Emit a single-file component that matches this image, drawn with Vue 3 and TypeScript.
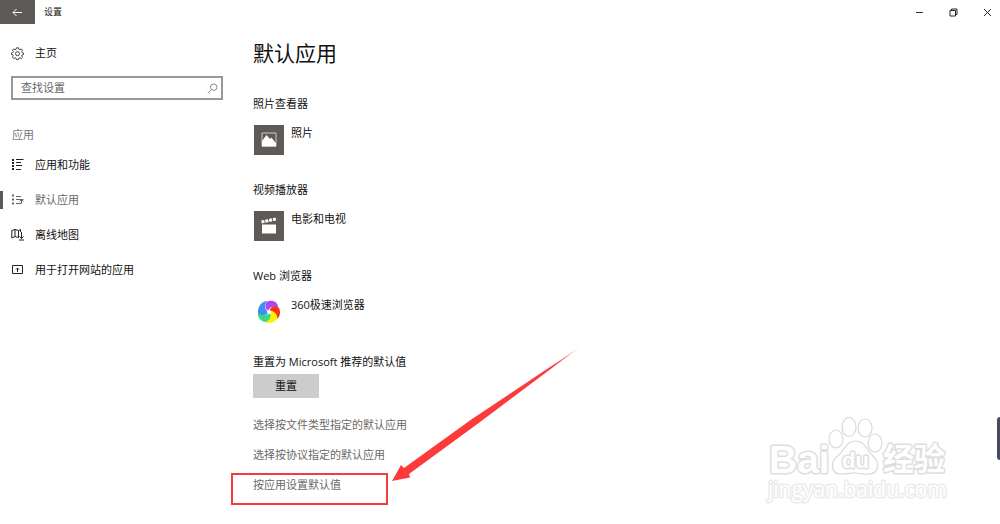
<script setup lang="ts">
import { ref } from 'vue'

interface NavItem {
  id: string
  label: string
}

interface DefaultApp {
  id: string
  category: string
  name: string
}

const query = ref('')
const active = ref('defaults')

const navItems: NavItem[] = [
  { id: 'features', label: '应用和功能' },
  { id: 'defaults', label: '默认应用' },
  { id: 'maps', label: '离线地图' },
  { id: 'websites', label: '用于打开网站的应用' },
]

const defaultApps: DefaultApp[] = [
  { id: 'photos', category: '照片查看器', name: '照片' },
  { id: 'video', category: '视频播放器', name: '电影和电视' },
  { id: 'browser', category: 'Web 浏览器', name: '360极速浏览器' },
]

const links: string[] = ['选择按文件类型指定的默认应用', '选择按协议指定的默认应用', '按应用设置默认值']
</script>

<template>
  <div class="window">
    <header class="titlebar">
      <button class="back" type="button" aria-label="返回">
        <svg width="11" height="9" viewBox="0 0 11 9">
          <path d="M10 4.500H1M4.500 1 1 4.500 4.500 8" fill="none" stroke="#fff" />
        </svg>
      </button>
      <span class="title">设置</span>
      <div class="controls">
        <button type="button" aria-label="最小化">
          <svg width="9" height="9" viewBox="0 0 9 9"><path d="M1 4.500h7" stroke="#333" /></svg>
        </button>
        <button type="button" aria-label="还原">
          <svg width="9" height="9" viewBox="0 0 9 9">
            <path d="M1 2.500h5.500V8H1zM2.500 2.500V1H8v5.500H6.500" fill="none" stroke="#222" />
          </svg>
        </button>
        <button type="button" aria-label="关闭">
          <svg width="9" height="9" viewBox="0 0 9 9">
            <path d="M1 1l7 7M8 1 1 8" fill="none" stroke="#222" />
          </svg>
        </button>
      </div>
    </header>

    <div class="body">
      <aside class="sidebar">
        <a class="home" href="#home">
          <svg width="13" height="13" viewBox="0 0 13 13" fill="none" stroke="#333" stroke-width=".9">
            <path d="M5.500 .8h2l.4 1.500 1 .4 1.400-.8 1.200 1.300-.8 1.400.4 1 1.400.4v1.500l-1.400.4-.4 1 .8 1.400-1.200 1.300-1.400-.8-1 .4-.4 1.400h-2l-.4-1.400-1-.4-1.400.8-1.200-1.300.8-1.400-.4-1L.5 7.500V6l1.400-.4.4-1-.8-1.400 1.200-1.300 1.400.8 1-.4z" />
            <circle cx="6.500" cy="6.700" r="2" />
          </svg>
          <span>主页</span>
        </a>
        <label class="search">
          <input v-model="query" type="text" placeholder="查找设置" aria-label="查找设置" />
          <svg width="11" height="11" viewBox="0 0 11 11" fill="none" stroke="#888">
            <circle cx="6.700" cy="4.200" r="3.200" />
            <path d="M4.400 6.500.8 10.200" />
          </svg>
        </label>
        <h2 class="group">应用</h2>
        <nav>
          <a
            v-for="item in navItems"
            :key="item.id"
            :href="'#' + item.id"
            :class="['nav-item', { active: item.id === active }]"
            @click="active = item.id"
          >
            <svg v-if="item.id === 'features'" width="13" height="13" viewBox="0 0 13 13" fill="none" stroke="#222">
              <path d="M2 1v11" stroke-width="2" stroke-dasharray="2 1" />
              <path d="M5 1.500h7.500M5 4.500h5M5 7.500h6M5 11.500h5" />
            </svg>
            <svg v-else-if="item.id === 'defaults'" width="13" height="13" viewBox="0 0 13 13" fill="none" stroke="#666">
              <path d="M1 2.500h2M1 6.500h2M1 10.500h2" stroke-width="2" />
              <path d="M5 3.500h5M5 6.500h7.500M5 10.500h5.500v-4M8.500 8.500l2-2 2 2" />
            </svg>
            <svg v-else-if="item.id === 'maps'" width="13" height="13" viewBox="0 0 13 13" fill="none" stroke="#222">
              <path d="M7.500 9.500 4 8.500.8 10V2.500L4 1.500l3.500 1 2-1V4M4 1.500v7M7.500 2.500v7M10.500 4v6.500M8.500 8.500l2 2 2-2M8 12h5" />
            </svg>
            <svg v-else width="13" height="13" viewBox="0 0 13 13" fill="none" stroke="#222">
              <path d="M1.500 2.500h10v8h-10zM6.500 9V5M5 6.500l1.500-1.500L8 6.500" />
            </svg>
            <span>{{ item.label }}</span>
          </a>
        </nav>
      </aside>

      <main class="content">
        <h1>默认应用</h1>

        <section v-for="app in defaultApps" :key="app.id" class="app">
          <h3>{{ app.category }}</h3>
          <button class="app-pick" type="button">
            <svg v-if="app.id === 'photos'" width="30" height="30" viewBox="0 0 30 30">
              <path fill="#5d5a58" d="M0 0h30v30H0z" />
              <path d="M8 8h14v13H8z" fill="none" stroke="#ccc" />
              <path d="M8 21.500V16l4.500-6 3.500 4 1.500-1.500 4.500 6v3z" fill="#fff" />
            </svg>
            <svg v-else-if="app.id === 'video'" width="30" height="30" viewBox="0 0 30 30">
              <path fill="#5d5a58" d="M0 0h30v30H0z" />
              <path d="M8 13.500h14v9H8z" fill="#fff" />
              <path d="M7.500 11 22 8" stroke="#fff" stroke-width="3" stroke-dasharray="3 .9" />
            </svg>
            <svg v-else width="30" height="30" viewBox="0 0 30 30">
              <g transform="translate(15 15)">
                <path d="M-1-1C-5-5-4-10 0-11 5-12 9-9 9-5L6-5C3-6 0-4-1-1" fill="#b044f4" />
                <path d="M0-1C2-6 7-7 10-4 12 0 11 5 8 7L6 3C5 0 3-2 0-1" fill="#fa3418" />
                <path d="M1-1C6-1 9 3 8 7 5 11-1 12-4 10L-1 7C2 5 2 2 1-1" fill="#fdf000" />
                <path d="M1 1C3 5 0 9-4 10-9 9-12 4-11 0L-7 1C-4 3-2 3 1 1" fill="#35da82" />
                <path d="M0 1C-5 4-10 4-11 0-11-6-7-11-2-11L-4-7C-4-4-3-1 0 1" fill="#438df7" />
                <circle r="2" fill="#fff" />
              </g>
            </svg>
            <span>{{ app.name }}</span>
          </button>
        </section>

        <section class="reset">
          <h3>重置为 Microsoft 推荐的默认值</h3>
          <button type="button">重置</button>
        </section>

        <ul class="links">
          <li v-for="(link, index) in links" :key="link">
            <a :href="'#link-' + index">{{ link }}</a>
            <template v-if="index === links.length - 1">
              <span class="highlight"></span>
              <svg class="arrow" width="190" height="136" viewBox="0 0 190 136">
                <defs>
                  <linearGradient id="tail" x1="0" y1="1" x2="1" y2="0">
                    <stop offset=".85" stop-color="#fb3a39" />
                    <stop offset="1" stop-color="#fb3a39" stop-opacity=".3" />
                  </linearGradient>
                </defs>
                <path d="M0 134 9 118 12 121 80 72 188 0 84 78 17 127 18 130.500z" fill="url(#tail)" />
              </svg>
            </template>
          </li>
        </ul>
      </main>
    </div>

    <svg class="watermark" width="190" height="92" viewBox="0 0 190 92">
      <g fill="#fff" stroke="#dadada" stroke-width="1.200" stroke-linejoin="round">
        <ellipse cx="71" cy="22" rx="7" ry="9" />
        <ellipse cx="84" cy="10" rx="7" ry="9.500" />
        <ellipse cx="100" cy="11" rx="7" ry="9" />
        <ellipse cx="110" cy="26" rx="7" ry="9" />
        <path d="M90 24C82 24 79 33 74 38 65 44 65 56 75 57 82 58 86 55 91 56 98 57 106 59 111 54 116 46 109 40 105 36 101 30 98 24 90 24z" />
      </g>
      <g class="lettering">
        <text class="brand" x="4" y="56">Bai</text>
        <text class="cjk" x="118" y="53">经验</text>
        <text class="du" x="77" y="51">du</text>
        <text class="site" x="3" y="80">jingyan.baidu.com</text>
      </g>
    </svg>
    <div class="side-handle"></div>
  </div>
</template>

<style>
body {
  margin: 0;
  background: #fff;
}
</style>

<style scoped>
.window {
  position: relative;
  min-height: 100vh;
  overflow: hidden;
  color: #111;
  background: #fff;
  font: 11px/16px 'Open Sans', 'Noto Sans CJK SC', sans-serif;
}
button,
input {
  font: inherit;
  color: inherit;
  border: 0;
  padding: 0;
  background: none;
}
a {
  color: inherit;
  text-decoration: none;
}
h1,
h2,
h3,
ul {
  margin: 0;
  padding: 0;
  font-weight: 400;
  list-style: none;
}
h2,
h3 {
  font-size: 11px;
}
svg {
  display: block;
  flex: none;
}
.titlebar {
  display: flex;
  align-items: center;
  height: 24px;
}
.back {
  display: grid;
  place-items: center;
  width: 35px;
  height: 24px;
  background: #5d5a58;
}
.title {
  margin-left: 9px;
  font-size: 9px;
}
.controls {
  display: flex;
  margin-left: auto;
}
.controls button {
  display: grid;
  place-items: center;
  width: 34px;
  height: 24px;
}
.controls button:last-child {
  margin-right: -4px;
}
.body {
  display: grid;
  grid-template-columns: 223px 1fr;
  column-gap: 30px;
}
.sidebar {
  padding-top: 21px;
}
.home,
.nav-item {
  display: flex;
  align-items: center;
  gap: 11px;
  padding-left: 11px;
}
.search {
  display: flex;
  align-items: center;
  box-sizing: border-box;
  height: 24px;
  margin: 15px 0 0 11px;
  padding: 0 3px 0 8px;
  border: 2px solid #999;
}
.search input {
  flex: 1;
  min-width: 0;
  outline: 0;
}
.search input::placeholder {
  color: #666;
  opacity: 1;
}
.group {
  margin: 27px 0 4px 12px;
  color: #777;
}
.nav-item {
  height: 35px;
}
.nav-item.active {
  color: #6b6866;
  background: linear-gradient(#5d5a58, #5d5a58) left center / 3px 18px no-repeat;
}
.content {
  padding-top: 14px;
}
h1 {
  font-size: 21px;
  line-height: 30px;
}
.app {
  height: 58px;
  margin-top: 28px;
}
.app-pick {
  display: flex;
  align-items: flex-start;
  gap: 7px;
  margin: 13px 0 0 1px;
  text-align: left;
}
.reset {
  margin-top: 28px;
}
.reset button {
  width: 66px;
  height: 24px;
  margin-top: 4px;
  background: #ccc;
}
.links {
  display: grid;
  gap: 14px;
  margin-top: 19px;
  color: #6b6866;
}
.links li {
  position: relative;
}
.highlight {
  position: absolute;
  top: -4px;
  left: -22px;
  box-sizing: border-box;
  width: 157px;
  height: 32px;
  border: 2px solid #f33c3c;
}
.arrow {
  position: absolute;
  bottom: 10px;
  left: 139px;
}
.watermark {
  position: absolute;
  right: 45px;
  bottom: 15px;
}
.lettering {
  fill: #fff;
  stroke: #dedede;
  stroke-width: 3px;
  stroke-linejoin: round;
  paint-order: stroke;
}
.brand {
  font: 700 39px 'Liberation Sans', sans-serif;
}
.cjk {
  font: 700 31px 'Noto Sans CJK SC', sans-serif;
}
.du {
  font: 700 22px 'Liberation Sans', sans-serif;
}
.site {
  font: 21px 'Open Sans', sans-serif;
  stroke: #ececec;
}
.side-handle {
  position: absolute;
  top: 417px;
  right: 0;
  width: 3px;
  height: 43px;
  border-radius: 3px 0 0 3px;
  background: #474b5c;
}
</style>
